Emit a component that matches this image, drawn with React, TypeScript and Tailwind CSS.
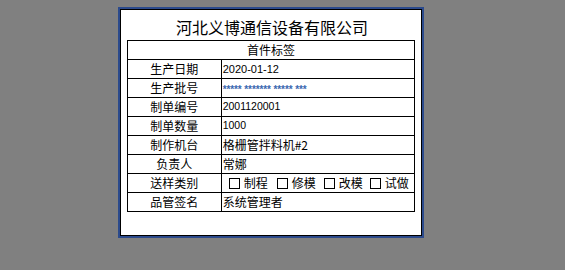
import React from "react";

type Row = { label: string; value?: React.ReactNode };

const cjk = { fontFamily: '"Noto Sans CJK SC", "Noto Sans", sans-serif' };
const latin = { fontFamily: '"Liberation Sans", "Noto Sans CJK SC", sans-serif' };

const Check: React.FC<{ text: string; className?: string }> = ({ text, className }) => (
  <span className={`flex items-center gap-[4px] ${className ?? ""}`}>
    <span className="w-[11px] h-[11px] border border-black bg-white" />
    <span>{text}</span>
  </span>
);

const rows: Row[] = [
  { label: "生产日期", value: <span style={latin} className="text-[11px]">2020-01-12</span> },
  {
    label: "生产批号",
    value: (
      <span style={latin} className="text-[10px] font-bold text-[#3a68b0] tracking-[-0.1px] pt-[3px]">
        ***** ******* ***** ***
      </span>
    ),
  },
  { label: "制单编号", value: <span style={latin} className="text-[10.5px]">2001120001</span> },
  { label: "制单数量", value: <span style={latin} className="text-[10.5px]">1000</span> },
  { label: "制作机台", value: <span className="text-[12px]">格栅管拌料机#2</span> },
  { label: "负责人", value: <span className="text-[12px]">常娜</span> },
  {
    label: "送样类别",
    value: (
      <div className="flex items-center text-[12px] pl-[6px]">
        <Check text="制程" />
        <Check text="修模" className="ml-[9px]" />
        <Check text="改模" className="ml-[8px]" />
        <Check text="试做" className="ml-[7px]" />
      </div>
    ),
  },
  { label: "品管签名", value: <span className="text-[12px]">系统管理者</span> },
];

export default function App() {
  return (
    <div className="w-screen h-screen bg-[#808080] overflow-hidden" style={cjk}>
      <div className="ml-[118px] pt-[7px]">
        <div className="w-[306px] h-[231px] border-2 border-[#2b4a8c]">
          <div className="h-full border border-black bg-white flex flex-col">
            <div className="h-[30px] flex items-end justify-center text-[16px] leading-none text-black pb-[5px] pl-[2px]">
              河北义博通信设备有限公司
            </div>
            <div className="ml-[6px] w-[288px] border-l border-t border-black text-black">
              <div className="h-[19px] border-r border-b border-black flex items-center justify-center text-[12px]">
                首件标签
              </div>
              {rows.map((r) => (
                <div key={r.label} className="flex h-[19px]">
                  <div className="w-[94px] border-r border-b border-black flex items-center justify-center text-[12px]">
                    {r.label}
                  </div>
                  <div className="w-[194px] border-r border-b border-black flex items-center pl-[1px]">
                    {r.value}
                  </div>
                </div>
              ))}
            </div>
          </div>
        </div>
      </div>
    </div>
  );
}
